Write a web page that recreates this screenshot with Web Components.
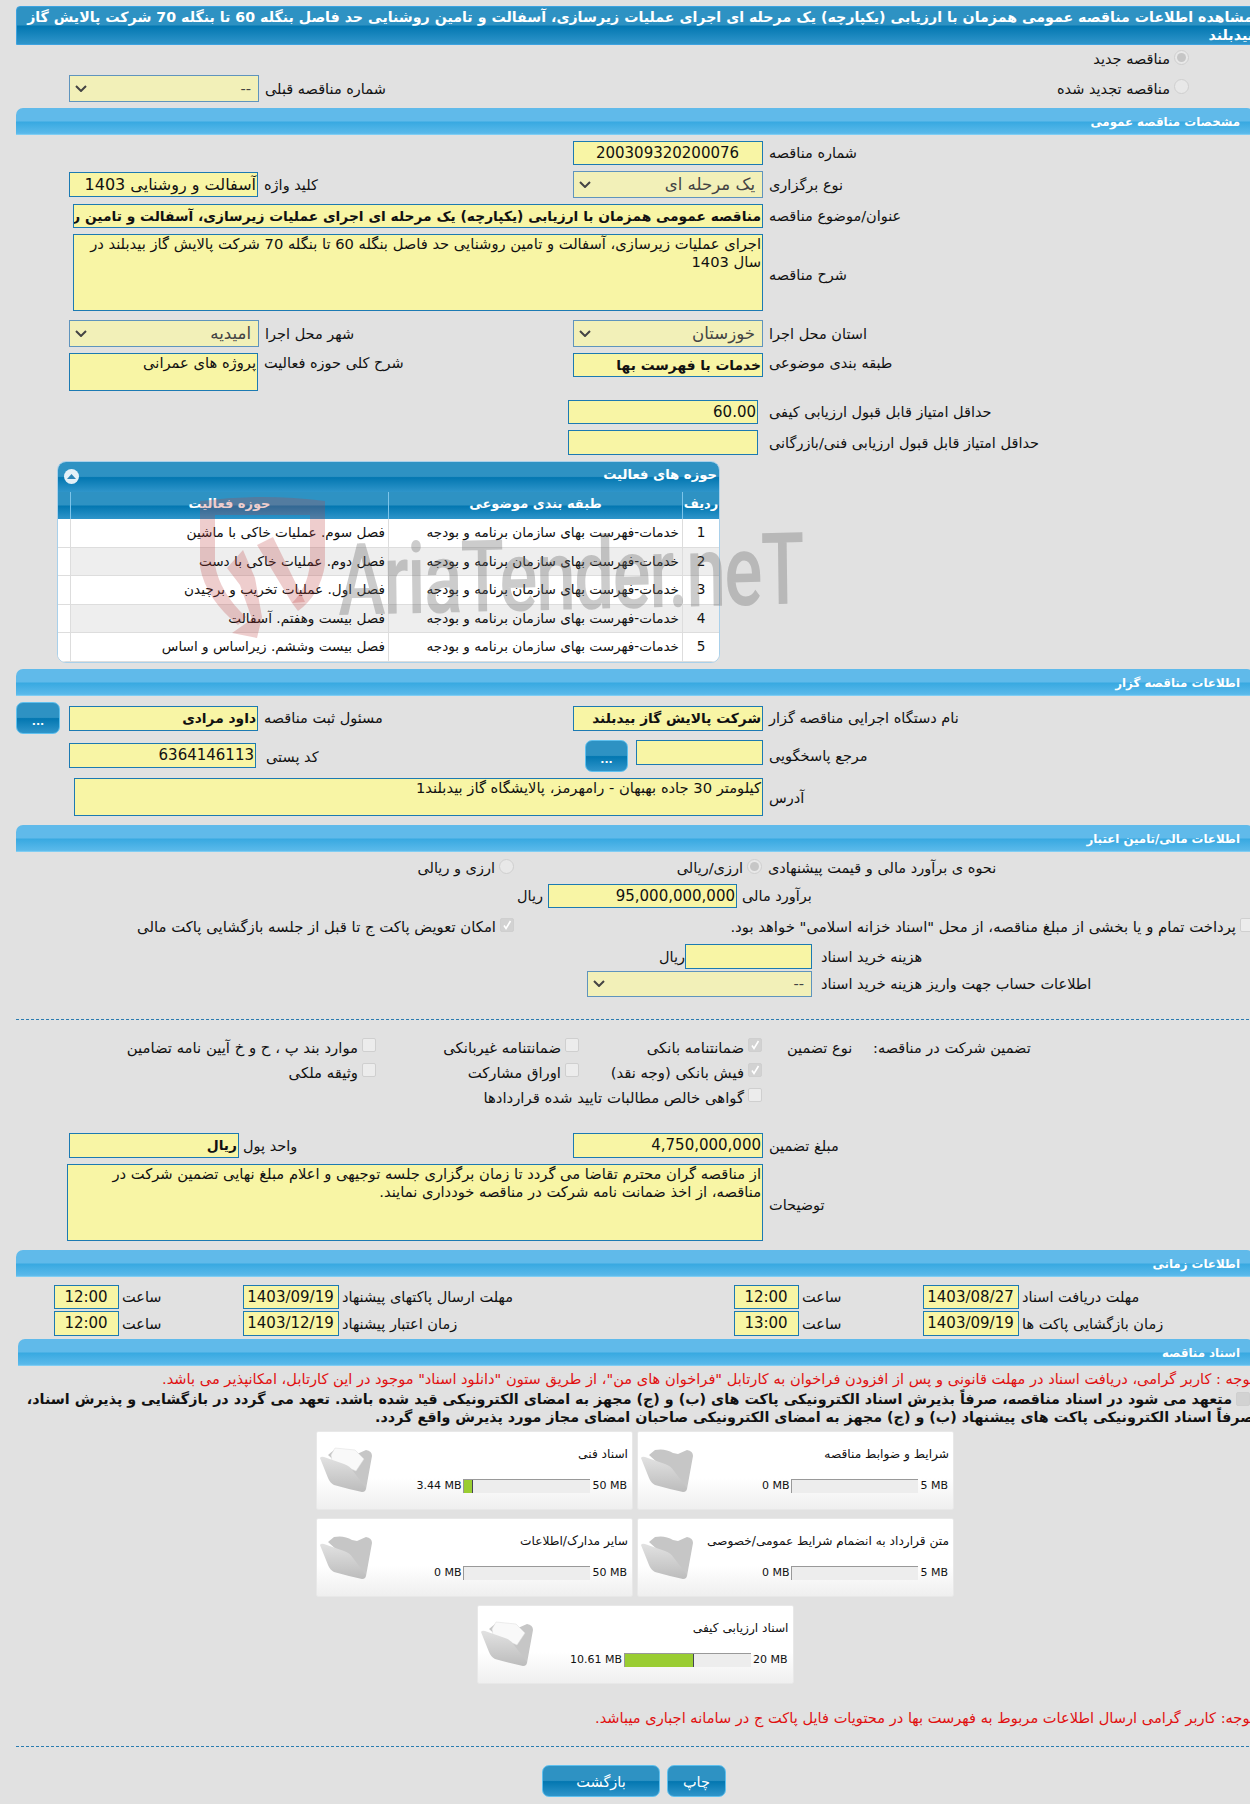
<!DOCTYPE html>
<html lang="fa">
<head>
<meta charset="utf-8">
<title>مشاهده اطلاعات مناقصه</title>
<style>
  html { overflow: hidden; }
  body { margin: 0; width: 1250px; height: 1804px; overflow: hidden; background: #e1e1e1; font: 14.5px "DejaVu Sans", sans-serif; color: #111; }
  .unit { display: block; direction: rtl; text-align: left; white-space: nowrap; }
</style>
</head>
<body>
<tender-page>
  <title-bar>مشاهده اطلاعات مناقصه عمومی همزمان با ارزیابی (یکپارچه) یک مرحله ای اجرای عملیات زیرسازی، آسفالت و تامین روشنایی حد فاصل بنگله 60 تا بنگله 70 شرکت پالایش گاز بیدبلند</title-bar>

  <form-row h="28"><form-field x="53"></form-field><radio-item r="65" checked>مناقصه جدید</radio-item></form-row>
  <form-row m="2" h="27">
    <form-field x="53" label="شماره مناقصه قبلی"><field-box w="190" h="27" kind="select">--</field-box></form-field>
    <radio-item r="65">مناقصه تجدید شده</radio-item>
  </form-row>

  <section-bar m="6">مشخصات مناقصه عمومی</section-bar>
  <form-row m="6" h="24"><span></span><form-field label="شماره مناقصه"><field-box w="190" h="24" fs="15" center>200309320200076</field-box></form-field></form-row>
  <form-row m="6" h="27">
    <form-field x="53" label="کلید واژه"><field-box w="189" h="25" fs="16">آسفالت و روشنایی 1403</field-box></form-field>
    <form-field label="نوع برگزاری"><field-box w="190" h="27" kind="select" fs="16.6">یک مرحله ای</field-box></form-field>
  </form-row>
  <form-row m="6" h="24" cols="1fr"><form-field x="57" label="عنوان/موضوع مناقصه"><field-box w="690" h="24" fs="13.8" bold>مناقصه عمومی همزمان با ارزیابی (یکپارچه) یک مرحله ای اجرای عملیات زیرسازی، آسفالت و تامین روشنایی حد فاصل بنگله 60 تا بنگله 70 شرکت پالایش گاز بیدبلند</field-box></form-field></form-row>
  <form-row m="6" h="77" cols="1fr"><form-field x="57" lt="4" label="شرح مناقصه"><field-box w="690" h="77" area>اجرای عملیات زیرسازی، آسفالت و تامین روشنایی حد فاصل بنگله 60 تا بنگله 70 شرکت پالایش گاز بیدبلند در سال 1403</field-box></form-field></form-row>
  <form-row m="9" h="27">
    <form-field x="53" label="شهر محل اجرا"><field-box w="190" h="27" kind="select" fs="16.6">امیدیه</field-box></form-field>
    <form-field label="استان محل اجرا"><field-box w="190" h="27" kind="select" fs="16.6">خوزستان</field-box></form-field>
  </form-row>
  <form-row m="6" h="38">
    <form-field x="53" label="شرح کلی حوزه فعالیت" top><field-box w="189" h="38" area>پروژه های عمرانی</field-box></form-field>
    <form-field label="طبقه بندی موضوعی" top><field-box w="190" h="24" fs="13.8" bold>خدمات با فهرست بها</field-box></form-field>
  </form-row>
  <form-row m="9" h="24"><span></span><form-field x="0" gap="11" label="حداقل امتیاز قابل قبول ارزیابی کیفی"><field-box w="190" h="24" fs="15">60.00</field-box></form-field></form-row>
  <form-row m="6" h="25"><span></span><form-field x="0" gap="11" label="حداقل امتیاز قابل قبول ارزیابی فنی/بازرگانی"><field-box w="190" h="25"></field-box></form-field></form-row>

  <activity-panel heading="حوزه های فعالیت">
    <activity-row num="1" cat="خدمات-فهرست بهای سازمان برنامه و بودجه">فصل سوم. عملیات خاکی با ماشین</activity-row>
    <activity-row num="2" cat="خدمات-فهرست بهای سازمان برنامه و بودجه" alt>فصل دوم. عملیات خاکی با دست</activity-row>
    <activity-row num="3" cat="خدمات-فهرست بهای سازمان برنامه و بودجه">فصل اول. عملیات تخریب و برچیدن</activity-row>
    <activity-row num="4" cat="خدمات-فهرست بهای سازمان برنامه و بودجه" alt>فصل بیست وهفتم. آسفالت</activity-row>
    <activity-row num="5" cat="خدمات-فهرست بهای سازمان برنامه و بودجه">فصل بیست وششم. زیراساس و اساس</activity-row>
  </activity-panel>

  <section-bar m="6">اطلاعات مناقصه گزار</section-bar>
  <form-row m="6" h="32">
    <form-field x="0" label="مسئول ثبت مناقصه" gap="6"><gel-button w="44" h="32" dots>...</gel-button><field-box style="margin-left:3px" w="189" h="25" fs="13.8" bold>داود مرادی</field-box></form-field>
    <form-field label="نام دستگاه اجرایی مناقصه گزار"><field-box w="190" h="25" fs="13.8" bold>شرکت پالایش گاز بیدبلند</field-box></form-field>
  </form-row>
  <form-row m="6" h="32">
    <form-field x="53" label="کد پستی" gap="10" top lt="9"><field-box style="margin-top:3px" w="187" h="25" fs="15">6364146113</field-box></form-field>
    <form-field x="17" label="مرجع پاسخگویی" top lt="8"><gel-button w="43" h="32" dots>...</gel-button><field-box style="margin-left:2px" w="127" h="25"></field-box></form-field>
  </form-row>
  <form-row m="6" h="38" cols="1fr"><form-field x="58" lt="2" label="آدرس"><field-box w="689" h="38" area>کیلومتر 30 جاده بهبهان - رامهرمز، پالایشگاه گاز بیدبلند1</field-box></form-field></form-row>

  <section-bar m="9">اطلاعات مالی/تامین اعتبار</section-bar>
  <form-row m="4" h="24">
    <radio-item r="54">ارزی و ریالی</radio-item>
    <form-field label="نحوه ی برآورد مالی و قیمت پیشنهادی" x="0"><radio-item w="194" checked>ارزی/ریالی</radio-item></form-field>
  </form-row>
  <form-row m="4" h="24" cols="1fr"><form-field x="503" gap="5" label="برآورد مالی"><span class="unit" style="width:24px">ریال</span><field-box w="189" h="24" fs="15">95,000,000,000</field-box></form-field></form-row>
  <form-row m="7" h="24">
    <check-item r="54" checked>امکان تعویض پاکت ج تا قبل از جلسه بازگشایی پاکت مالی</check-item>
    <check-item r="0">پرداخت تمام و یا بخشی از مبلغ مناقصه، از محل "اسناد خزانه اسلامی" خواهد بود.</check-item>
  </form-row>
  <form-row m="5" h="25">
    <span></span>
    <form-field x="93" gap="9" label="هزینه خرید اسناد"><span class="unit" style="width:24px;margin-right:-9px">ریال</span><field-box w="127" h="25"></field-box></form-field>
  </form-row>
  <form-row m="2" h="26"><span></span><form-field x="19" gap="9" label="اطلاعات حساب جهت واریز هزینه خرید اسناد"><field-box w="225" h="26" kind="select">--</field-box></form-field></form-row>
  <dash-line m="22"></dash-line>

  <guarantee-grid m="15">
    <check-item>موارد بند پ ، ح و خ آیین نامه تضامین</check-item>
    <check-item>ضمانتنامه غیربانکی</check-item>
    <check-item checked>ضمانتنامه بانکی</check-item>
    <span class="unit" style="margin-left:25px">نوع تضمین</span>
    <span class="unit" style="margin-left:20px">تضمین شرکت در مناقصه:</span>
    <check-item>وثیقه ملکی</check-item>
    <check-item>اوراق مشارکت</check-item>
    <check-item checked>فیش بانکی (وجه نقد)</check-item>
    <span></span><span></span>
    <span></span><span></span>
    <check-item>گواهی خالص مطالبات تایید شده قراردادها</check-item>
    <span></span><span></span>
  </guarantee-grid>

  <form-row m="23" h="25">
    <form-field x="53" gap="4" label="واحد پول"><field-box w="170" h="25" fs="13.8" bold>ریال</field-box></form-field>
    <form-field label="مبلغ تضمین"><field-box w="190" h="25" fs="15">4,750,000,000</field-box></form-field>
  </form-row>
  <form-row m="6" h="77" cols="1fr"><form-field x="51" lt="4" label="توضیحات"><field-box w="696" h="77" area>از مناقصه گران محترم تقاضا می گردد تا زمان برگزاری جلسه توجیهی و اعلام مبلغ نهایی تضمین شرکت در مناقصه، از اخذ ضمانت نامه شرکت در مناقصه خودداری نمایند.</field-box></form-field></form-row>

  <section-bar m="9">اطلاعات زمانی</section-bar>
  <time-row m="8" h="24">
    <form-field gap="3" x="0" label="ساعت"><field-box w="65" h="24" fs="15" center>12:00</field-box></form-field>
    <form-field gap="3" x="0" label="مهلت ارسال پاکتهای پیشنهاد"><field-box w="96" h="24" fs="15" center>1403/09/19</field-box></form-field>
    <form-field gap="3" x="0" label="ساعت"><field-box w="65" h="24" fs="15" center>12:00</field-box></form-field>
    <form-field gap="3" x="0" label="مهلت دریافت اسناد"><field-box w="96" h="24" fs="15" center>1403/08/27</field-box></form-field>
  </time-row>
  <time-row m="2" h="25">
    <form-field gap="3" x="0" label="ساعت"><field-box w="65" h="25" fs="15" center>12:00</field-box></form-field>
    <form-field gap="3" x="0" label="زمان اعتبار پیشنهاد"><field-box w="96" h="25" fs="15" center>1403/12/19</field-box></form-field>
    <form-field gap="3" x="0" label="ساعت"><field-box w="65" h="25" fs="15" center>13:00</field-box></form-field>
    <form-field gap="3" x="0" label="زمان بازگشایی پاکت ها"><field-box w="96" h="25" fs="15" center>1403/09/19</field-box></form-field>
  </time-row>

  <section-bar m="3" x="2">اسناد مناقصه</section-bar>
  <doc-notes>
    <note-line>توجه : کاربر گرامی، دریافت اسناد در مهلت قانونی و پس از افزودن فراخوان به کارتابل "فراخوان های من"، از طریق ستون "دانلود اسناد" موجود در این کارتابل، امکانپذیر می باشد.</note-line>
    <pledge-text>متعهد می شود در اسناد مناقصه، صرفاً بذیرش اسناد الکترونیکی پاکت های (ب) و (ج) مجهز به امضای الکترونیکی قید شده باشد. تعهد می گردد در بازگشایی و پذیرش اسناد، صرفاً اسناد الکترونیکی پاکت های پیشنهاد (ب) و (ج) مجهز به امضای الکترونیکی صاحبان امضای مجاز مورد پذیرش واقع گردد.</pledge-text>
  </doc-notes>
  <doc-cards>
    <doc-card used="3.44 MB" max="50 MB" pct="7" paper>اسناد فنی</doc-card>
    <doc-card used="0 MB" max="5 MB" pct="0">شرایط و ضوابط مناقصه</doc-card>
    <doc-card used="0 MB" max="50 MB" pct="0">سایر مدارک/اطلاعات</doc-card>
    <doc-card used="0 MB" max="5 MB" pct="0">متن قرارداد به انضمام شرایط عمومی/خصوصی</doc-card>
    <doc-card used="10.61 MB" max="20 MB" pct="55" paper>اسناد ارزیابی کیفی</doc-card>
  </doc-cards>
  <note-line m="25">توجه: کاربر گرامی ارسال اطلاعات مربوط به فهرست بها در محتویات فایل پاکت ج در سامانه اجباری میباشد.</note-line>
  <dash-line m="19"></dash-line>
  <page-actions>
    <gel-button w="118" h="32">بازگشت</gel-button>
    <gel-button w="59" h="32">چاپ</gel-button>
  </page-actions>
</tender-page>

<script>
const GEL = "linear-gradient(#2e92c3 0, #2e92c3 48%, #0377b1 52%, #2f95ca 100%)";
const SKY = "linear-gradient(#60baea 0, #60baea 48%, #38a9e1 52%, #5ab9ea 94%, #8fd6f7 100%)";

// small helper, every element here is the same boilerplate
function el(name, render) {
  customElements.define(name, class extends HTMLElement {
    constructor() {
      super();
      this.attachShadow({ mode: "open" });
    }
    connectedCallback() {
      this.shadowRoot.innerHTML = render(this);
    }
  });
}
const num = (node, attr, dflt) => node.hasAttribute(attr) ? node.getAttribute(attr) : dflt;

el("tender-page", () => `
  <style>:host { display: block; width: 1238px; margin-left: 16px; padding-top: 6px; }</style>
  <slot></slot>`);

el("title-bar", () => `
  <style>
    :host { display: block; height: 39px; box-sizing: border-box; background: ${GEL}; border: 1px solid #3ea2df; border-radius: 4px 4px 0 0;
      color: #fff; font-weight: bold; font-size: 14.2px; line-height: 18px; direction: rtl; text-align: right; padding: 1px 0 0 6px; overflow: hidden; }
  </style><slot></slot>`);

el("section-bar", n => `
  <style>
    :host { display: block; height: 27px; box-sizing: border-box; margin-top: ${num(n, "m", 0)}px; margin-left: ${num(n, "x", 0)}px; background: ${SKY};
      border-radius: 7px 7px 0 0; color: #fff; font-weight: bold; font-size: 11.8px; line-height: 28px; direction: rtl; text-align: right; padding-right: 14px; }
  </style><slot></slot>`);

el("form-row", n => `
  <style>
    :host { display: grid; grid-template-columns: ${n.getAttribute("cols") || "552px 1fr"}; height: ${num(n, "h", 24)}px; margin-top: ${num(n, "m", 0)}px; }
  </style><slot></slot>`);

el("form-field", n => `
  <style>
    :host { display: flex; align-items: ${n.hasAttribute("top") ? "flex-start" : "center"}; gap: ${num(n, "gap", 6)}px; padding-left: ${num(n, "x", 5)}px; min-width: 0; }
    .label { direction: rtl; white-space: nowrap; margin-top: ${num(n, "lt", n.hasAttribute("top") ? 2 : 0)}px; }
  </style>
  <slot></slot>
  <span class="label">${n.getAttribute("label") || ""}</span>`);

el("field-box", n => {
  const select = n.getAttribute("kind") === "select";
  const area = n.hasAttribute("area");
  return `
  <style>
    :host { display: block; flex: none; box-sizing: border-box; width: ${num(n, "w", 190)}px; height: ${num(n, "h", 24)}px; direction: rtl; overflow: hidden; position: relative;
      background: ${select ? "#f2f0b8" : "#f8f5a5"}; border: 1px solid ${select ? "#5f94bd" : "#1c7ab2"}; color: ${select ? "#444" : "#111"};
      font-size: ${num(n, "fs", 14.7)}px; font-weight: ${n.hasAttribute("bold") ? "bold" : "normal"};
      text-align: ${n.hasAttribute("center") ? "center" : "right"}; white-space: ${area ? "normal" : "nowrap"};
      line-height: ${area ? "18px" : (num(n, "h", 24) - 2) + "px"}; padding: ${select ? "0 7px 0 0" : "0 1px 0 0"}; }
    svg { position: absolute; left: 5px; top: 50%; margin-top: -4px; }
  </style>
  <slot></slot>
  ${select ? '<svg width="12" height="7" viewBox="0 0 12 7"><path d="M1 1 L6 6 L11 1" fill="none" stroke="#444" stroke-width="2"/></svg>' : ""}`;
});

el("radio-item", n => `
  <style>
    :host { display: flex; align-items: center; gap: 4px; direction: rtl; white-space: nowrap; ${n.hasAttribute("w") ? `width:${n.getAttribute("w")}px;` : ""}
      ${n.hasAttribute("r") ? `padding-right:${n.getAttribute("r")}px; ` : ""} }
    i { flex: none; width: 15px; height: 15px; box-sizing: border-box; border-radius: 50%; background: #e8e8e8; border: 1px solid #cfcfcf; display: grid; place-items: center; margin-top: -4px; }
    b { width: 9px; height: 9px; border-radius: 50%; background: ${n.hasAttribute("checked") ? "#c6c6c6" : "transparent"}; }
  </style>
  <i><b></b></i><span><slot></slot></span>`);

el("check-item", n => `
  <style>
    :host { display: flex; align-items: center; gap: 4px; direction: rtl; white-space: nowrap; font-size: 14.85px; padding-right: ${num(n, "r", 0)}px; justify-self: end; }
    i { flex: none; width: 14px; height: 14px; box-sizing: border-box; border-radius: 2px; background: ${n.hasAttribute("checked") ? "#d2d2d2" : "#ececec"}; border: 1px solid #cfcfcf; margin-top: -5px; display: grid; place-items: center; }
    svg { display: block; }
  </style>
  <i>${n.hasAttribute("checked") ? '<svg width="10" height="10" viewBox="0 0 10 10"><path d="M2 5.5 L4 8.5 L8.5 1" fill="none" stroke="#fff" stroke-width="1.6"/></svg>' : ""}</i>
  <span><slot></slot></span>`);

el("dash-line", n => `
  <style>:host { display: block; margin-top: ${num(n, "m", 0)}px; border-top: 1px dashed #2b7cb0; }</style>`);

el("guarantee-grid", n => `
  <style>
    :host { display: grid; grid-template-columns: 360px 203px 183px 91px max-content; grid-auto-rows: 25px; align-items: center; margin-top: ${num(n, "m", 0)}px; }
  </style><slot></slot>`);

el("time-row", n => `
  <style>
    :host { display: grid; grid-template-columns: 189px 491px 189px 1fr; height: ${num(n, "h", 24)}px; margin-top: ${num(n, "m", 0)}px; padding-left: 38px; }
  </style><slot></slot>`);

el("gel-button", n => `
  <style>
    :host { display: block; flex: none; box-sizing: border-box; width: ${num(n, "w", 44)}px; height: ${num(n, "h", 32)}px; background: ${GEL}; border: 1px solid #5fc0ee; border-radius: 7px;
      color: #fff; text-align: center; font-size: 14.5px; line-height: 32px; direction: rtl; ${n.hasAttribute("dots") ? "line-height: 38px; font-size: 11px; font-weight: bold;" : ""} }
  </style><slot></slot>`);

el("activity-panel", n => `
  <style>
    :host { display: block; position: relative; width: 663px; height: 202px; box-sizing: border-box; margin: 6px 0 0 41px; background: #fff; border: 1px solid #a9d0ea; border-radius: 9px; direction: rtl; }
    .head { height: 30px; background: ${GEL}; border-radius: 8px 8px 0 0; color: #fff; font-weight: bold; font-size: 13.2px; line-height: 26px; padding-right: 2px; display: flex; justify-content: space-between; }
    .toggle { width: 15px; height: 15px; border-radius: 50%; background: #e5f1f8; margin: 7px 0 0 6px; display: grid; place-items: center; }
    .toggle svg { display: block; }
    .cols { display: grid; grid-template-columns: 37px 294px 318px 1fr; height: 27px; background: ${GEL}; color: #fff; font-weight: bold; font-size: 13px; text-align: center; line-height: 24px; }
    .cols span { border-left: 1px solid #7cc4ea; }
    .cols span:last-child { border: 0; }
    .rows { overflow: hidden; border-radius: 0 0 8px 8px; }
    .mark { position: absolute; left: 132px; top: 33px; pointer-events: none; }
    .word { position: absolute; left: 280px; top: 69px; direction: ltr; font: 500 100px Roboto, sans-serif; color: rgba(100,100,100,.33); white-space: nowrap; transform: scaleX(.71) rotate(-1deg); transform-origin: 0 50%; letter-spacing: -2px; line-height: 1; pointer-events: none; }
  </style>
  <div class="head"><span>${n.getAttribute("heading")}</span><span class="toggle"><svg width="9" height="6" viewBox="0 0 9 6"><path d="M0 5 L4.5 0 L9 5Z" fill="#2e86b8"/></svg></span></div>
  <div class="cols"><span>ردیف</span><span>طبقه بندی موضوعی</span><span>حوزه فعالیت</span><span></span></div>
  <div class="rows"><slot></slot></div>
  <svg class="mark" width="150" height="150" viewBox="0 0 150 150">
    <path d="M10 6 Q72 -2 135 6 L135 20 L10 20 Z M10 20 L25 20 L25 70 Q30 98 56 122 L48 130 Q16 104 10 72 Z M120 20 L135 20 L135 70 Q130 100 108 116 L102 108 Q118 92 120 68 Z" fill="rgba(190,60,60,.26)"/>
    <path d="M67 50 L83 42 L115 107 L102 108 Z M37 73 L53 55 L65 83 L50 90 Z M50 90 L65 83 L72 122 L67 143 L42 138 L62 124 Z" fill="rgba(190,60,60,.26)"/>
  </svg>
  <div class="word">AriaTender.neT</div>`);

el("activity-row", n => `
  <style>
    :host { display: grid; grid-template-columns: 37px 294px 318px 1fr; height: 28.6px; box-sizing: border-box; line-height: 27px; font-size: 13.6px; border-bottom: 1px solid #ddd; background: ${n.hasAttribute("alt") ? "#eee" : "#fff"}; }
    span { border-left: 1px solid #ddd; padding-right: 3px; white-space: nowrap; overflow: hidden; }
    span:nth-of-type(1) { text-align: center; padding: 0; }
    span:nth-of-type(4) { border: 0; background: #fff; }
  </style>
  <span>${n.getAttribute("num")}</span><span>${n.getAttribute("cat")}</span><span><slot></slot></span><span></span>`);

el("doc-notes", () => `
  <style>:host { display: block; margin-top: 4px; direction: rtl; }</style><slot></slot>`);

el("note-line", n => `
  <style>:host { display: block; margin-top: ${num(n, "m", 0)}px; color: #e01010; direction: rtl; white-space: nowrap; line-height: 18px; font-size: 14.6px; }</style><slot></slot>`);

el("pledge-text", () => `
  <style>
    :host { display: block; font-weight: bold; font-size: 14.3px; line-height: 18px; direction: rtl; margin-top: 2px; }
    i { display: inline-block; width: 14px; height: 14px; background: #d2d2d2; border: 1px solid #cfcfcf; box-sizing: border-box; border-radius: 2px; margin: 0 4px 0 4px; vertical-align: -2px; }
  </style><i></i><slot></slot>`);

el("doc-cards", () => `
  <style>:host { display: flex; flex-wrap: wrap; justify-content: center; gap: 8px 4px; width: 638px; margin: 5px auto 0; direction: ltr; }</style><slot></slot>`);

el("doc-card", n => {
  const pct = +n.getAttribute("pct");
  return `
  <style>
    :host { display: block; position: relative; width: 317px; height: 79px; box-sizing: border-box; background: linear-gradient(#fff 60%, #efefef); border: 1px solid #e8e8e8; border-radius: 2px; font-size: 11px; }
    .name { direction: rtl; text-align: right; margin: 15px 4px 0 0; line-height: 14px; white-space: nowrap; font-size: 12.2px; }
    .meter { display: flex; justify-content: flex-end; align-items: center; gap: 2px; margin: 18px 5px 0 0; line-height: 14px; }
    .bar { width: 127px; height: 14px; box-sizing: border-box; background: #ededed; border-top: 1px solid #999; border-left: 1px solid #999; flex: none; }
    .fill { height: 100%; width: ${pct}%; background: #9acd32; ${pct ? "border-right: 1px solid #445;" : ""} box-sizing: border-box; }
    svg { position: absolute; left: 3px; top: 15px; }
  </style>
  <svg width="52" height="46" viewBox="0 0 52 46">
    <defs><linearGradient id="f" x1="0" y1="0" x2="0" y2="1"><stop offset="0" stop-color="#e2e2e2"/><stop offset="1" stop-color="#bcbcbc"/></linearGradient></defs>
    <path d="M8 8 L14 3 Q24 1 32 6 L37 7 L46 3 Q52 4 52 9 L46 42 Z" fill="#c6c6c6"/>
    ${n.hasAttribute("paper") ? '<path d="M11 8 L15 1 L35 3 L44 12 L36 24 L12 14Z" fill="#f9f9f9" stroke="#ddd" stroke-width=".5"/>' : ""}
    <path d="M0 11 Q1 9 4 10 L24 17 Q30 19 33 24 L46 41 Q46 45 42 45 Q28 42 14 38 Q10 36 8 31 Z" fill="url(#f)"/>
  </svg>
  <div class="name"><slot></slot></div>
  <div class="meter"><span>${n.getAttribute("used")}</span><div class="bar"><div class="fill"></div></div><span>${n.getAttribute("max")}</span></div>`;
});

el("page-actions", () => `
  <style>:host { display: flex; justify-content: center; gap: 7px; margin-top: 18px; padding-right: 2px; }</style><slot></slot>`);
</script>
</body>
</html>
